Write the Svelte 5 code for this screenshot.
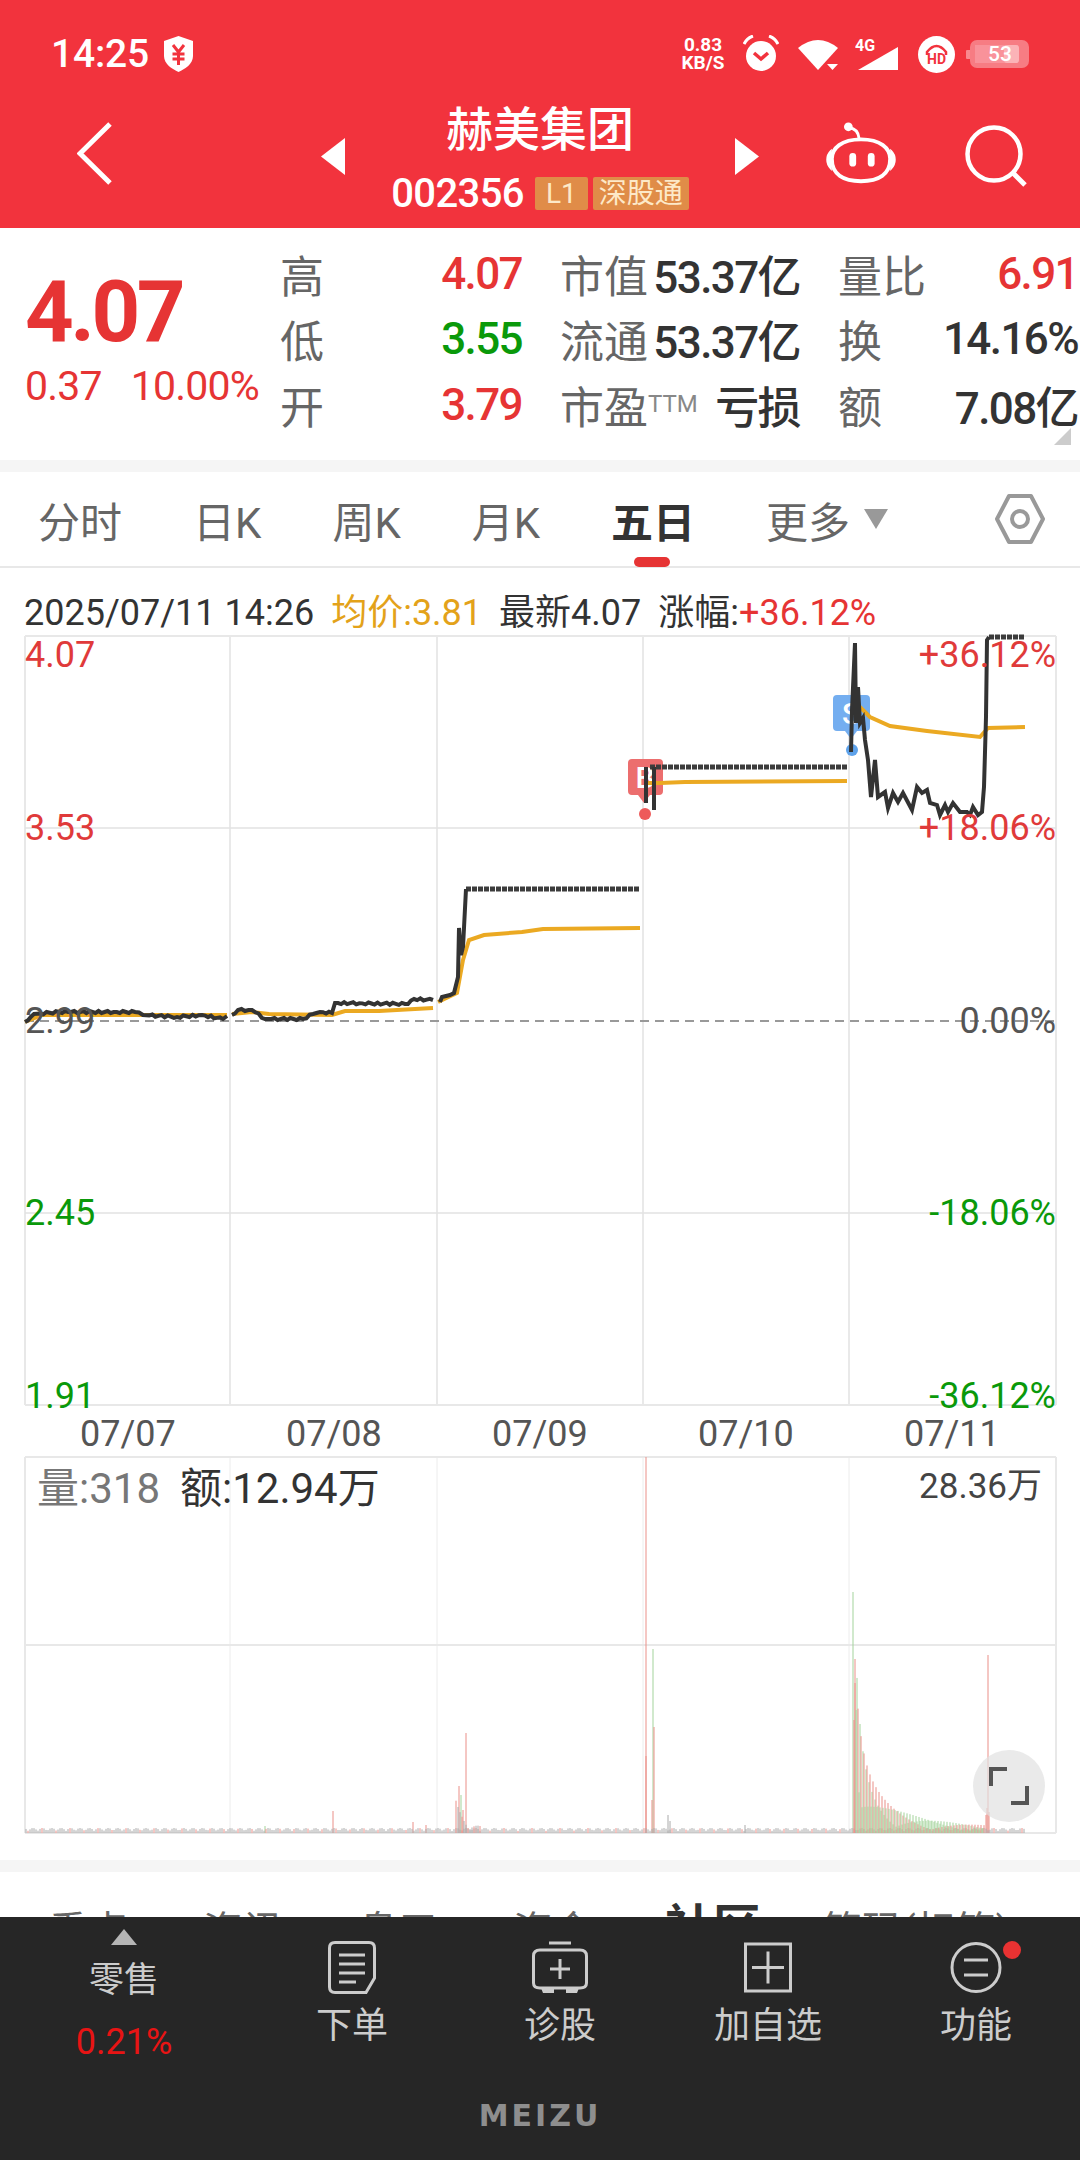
<script>
  const tabs = ["分时", "日K", "周K", "月K", "五日"];
  const lowerTabs = ["重点", "资讯", "盘口", "资金", "社区", "筹码(标签)"];

  const gridX = [25, 230, 437, 643, 849, 1056];
  const gridY = [636, 828, 1213, 1405];

  const leftLabels = [
    { text: "4.07", y: 667, color: "red" },
    { text: "3.53", y: 840, color: "red" },
    { text: "2.99", y: 1033, color: "gray" },
    { text: "2.45", y: 1225, color: "green" },
    { text: "1.91", y: 1408, color: "green" },
  ];
  const rightLabels = [
    { text: "+36.12%", y: 667, color: "red" },
    { text: "+18.06%", y: 840, color: "red" },
    { text: "0.00%", y: 1033, color: "gray" },
    { text: "-18.06%", y: 1225, color: "green" },
    { text: "-36.12%", y: 1408, color: "green" },
  ];
  const dates = ["07/07", "07/08", "07/09", "07/10", "07/11"];

  // adds a small wobble between anchors, the quiet days are not smooth
  function noisy(pts, amp) {
    const out = [];
    for (let i = 0; i < pts.length - 1; i++) {
      const [x0, y0] = pts[i];
      const [x1, y1] = pts[i + 1];
      const steps = Math.max(1, Math.floor((x1 - x0) / 3));
      for (let s = 0; s < steps; s++) {
        const t = s / steps;
        const w = s === 0 ? 0 : Math.round(Math.sin(x0 * 1.7 + s * 2.3) * amp);
        out.push([x0 + (x1 - x0) * t, y0 + (y1 - y0) * t + w]);
      }
    }
    out.push(pts[pts.length - 1]);
    return out;
  }

  const toPath = (pts) => pts.map((p) => p.join(",")).join(" ");

  const black = [
    noisy([[25, 1022], [34, 1014], [59, 1012], [135, 1012], [143, 1015], [177, 1017], [202, 1015], [223, 1019], [227, 1016]], 1),
    noisy([[232, 1015], [238, 1010], [252, 1010], [265, 1019], [303, 1019], [313, 1014], [320, 1012], [332, 1013], [335, 1003], [408, 1004], [414, 999], [433, 1000]], 1),
    [[440, 1002], [442, 997], [450, 995], [454, 993], [458, 977], [459, 928], [461, 955], [463, 947], [466, 889]],
    [[646, 803], [646, 767]],
    [[654, 810], [654, 767]],
    [[851, 752], [852, 710], [855, 643], [856, 723], [858, 687], [860, 723], [863, 718], [865, 740], [868, 760], [871, 797], [875, 760], [878, 797], [885, 792], [888, 808], [893, 793], [898, 802], [903, 793], [912, 810], [917, 787], [922, 793], [927, 790], [930, 803], [937, 805], [940, 815], [945, 805], [948, 812], [953, 803], [960, 812], [967, 812], [970, 815], [973, 807], [978, 815], [982, 812], [984, 787], [986, 717], [987, 640], [989, 637]],
  ];
  const flats = [
    [[466, 889], [640, 889]],
    [[650, 767], [847, 767]],
    [[989, 637], [1025, 637]],
  ];
  const yellow = [
    [[25, 1022], [42, 1015], [227, 1015]],
    [[232, 1014], [252, 1012], [269, 1014], [332, 1015], [345, 1011], [379, 1011], [433, 1008]],
    [[438, 1002], [457, 993], [463, 960], [469, 940], [484, 935], [522, 932], [543, 929], [640, 928]],
    [[647, 783], [660, 783], [685, 782], [847, 781]],
    [[855, 710], [860, 707], [870, 717], [890, 726], [927, 731], [980, 737], [988, 728], [1025, 727]],
  ];

  // volume bars: [x, top y, kind]
  const peaks = [
    [646, 1457, "r"], [646, 1756, "r"], [653, 1649, "g"], [654, 1727, "r"], [652, 1800, "r"],
    [853, 1592, "g"], [855, 1659, "r"], [855, 1683, "r"], [856, 1710, "g"], [854, 1720, "r"],
    [988, 1655, "r"], [986, 1815, "r"], [987, 1808, "r"], [989, 1812, "r"],
    [466, 1733, "r"], [459, 1786, "r"], [461, 1795, "g"], [463, 1810, "r"], [333, 1811, "r"],
    [413, 1822, "r"], [426, 1825, "r"], [668, 1815, "n"], [670, 1821, "n"], [745, 1825, "n"], [265, 1826, "g"],
  ];
  const volBars = [...peaks];
  for (let x = 26; x < 1026; x += 2) {
    const h = 2 + Math.abs(Math.sin(x * 12.9)) * 3;
    volBars.push([x, 1833 - h, x % 14 === 0 ? "r" : "n"]);
  }
  // day 3 and day 5 opening clusters fall away quickly
  for (let x = 456; x < 482; x += 2) {
    volBars.push([x, 1833 - (150 / (x - 450)) * (0.4 + Math.abs(Math.sin(x * 7.7))), x % 3 ? "n" : "r"]);
  }
  for (let x = 857; x < 985; x += 1) {
    const jitter = 0.3 + Math.abs(Math.sin(x * 7.3)) * 0.9;
    const h = (1600 / Math.pow(x - 848, 1.12)) * jitter;
    volBars.push([x, 1833 - h, x % 3 === 0 ? "r" : "g"]);
  }
</script>

<div class="page">
  <header class="top">
    <div class="status">
      <span class="time">14:25</span>
      <svg class="shield" viewBox="0 0 29 36">
        <path d="M14.5 0 L29 5 V20 C29 28 21 33 14.5 36 C8 33 0 28 0 20 V5 Z" fill="#fff" />
        <path d="M9 9 L14.5 16 L20 9 M8.5 18 H20.5 M8.5 23 H20.5 M14.5 16 V29" stroke="#f2333d" stroke-width="3" fill="none" />
      </svg>
      <div class="status-right">
        <div class="speed"><span>0.83</span><span>KB/S</span></div>
        <svg class="alarm" viewBox="0 0 36 38">
          <circle cx="18" cy="21" r="15" fill="#fff" />
          <path d="M11 18 L18 24 L25 18" stroke="#f2333d" stroke-width="3.5" fill="none" />
          <path d="M1 9 Q4 3 10 1 M35 9 Q32 3 26 1" stroke="#fff" stroke-width="3" fill="none" />
        </svg>
        <svg class="wifi" viewBox="0 0 40 30">
          <path d="M0 8 Q20 -8 40 8 L20 30 Z" fill="#fff" />
          <path d="M29 24 H40 L34.5 30 Z" fill="#fff" />
        </svg>
        <svg class="signal" viewBox="0 0 43 34">
          <path d="M3 34 L43 11 V34 Z" fill="#fff" />
          <text x="0" y="15" class="sig-text">4G</text>
        </svg>
        <svg class="hd" viewBox="0 0 37 37">
          <circle cx="18.5" cy="18.5" r="18.5" fill="#fff" />
          <path d="M9 19 V16 Q18.5 4 28 16 V19" stroke="#f2333d" stroke-width="2.5" fill="none" />
          <text x="18.5" y="28" text-anchor="middle" class="hd-text">HD</text>
        </svg>
        <svg class="battery" viewBox="0 0 63 28">
          <rect x="0" y="10" width="5" height="9" rx="1" fill="#f9888e" />
          <rect x="4" y="0" width="59" height="28" rx="7" fill="#f77c83" />
          <path d="M9 5 H52 V23 H9 Z" fill="#f9929a" />
          <rect x="38" y="5" width="15" height="18" rx="3" fill="#fbb3b7" />
          <text x="34" y="21" text-anchor="middle" class="bat-text">53</text>
        </svg>
      </div>
    </div>

    <div class="nav">
      <div class="nav-left">
        <svg class="back" viewBox="0 0 35 63">
          <path d="M33 2 L3 31.5 L33 61" stroke="#fff" stroke-width="5" fill="none" />
        </svg>
        <svg class="tri" viewBox="0 0 24 37"><path d="M24 0 V37 L0 18.5 Z" fill="#fff" /></svg>
      </div>
      <div class="nav-mid">
        <div class="title">赫美集团</div>
        <div class="code-row">
          <span class="code">002356</span>
          <span class="badge l1">L1</span>
          <span class="badge">深股通</span>
        </div>
      </div>
      <div class="nav-right">
        <svg class="tri" viewBox="0 0 24 37"><path d="M0 0 V37 L24 18.5 Z" fill="#fff" /></svg>
        <svg class="robot" viewBox="0 0 72 64">
          <circle cx="23" cy="5" r="4.5" fill="#fff" />
          <path d="M24 6 Q33 7 34 17" stroke="#fff" stroke-width="3" fill="none" />
          <path d="M36 18 C16 18 6 27 6 38 C6 54 18 61 36 61 C54 61 66 54 66 38 C66 27 56 18 36 18 Z" stroke="#fff" stroke-width="4" fill="none" />
          <path d="M5 30 C0 35 0 43 5 48 Z M67 30 C72 35 72 43 67 48 Z" fill="#fff" stroke="#fff" stroke-width="2" />
          <rect x="24" y="32" width="7" height="14" rx="3.5" fill="#fff" />
          <rect x="43" y="32" width="7" height="14" rx="3.5" fill="#fff" />
        </svg>
        <svg class="search" viewBox="0 0 64 62">
          <circle cx="29" cy="29" r="26.5" stroke="#fff" stroke-width="4.5" fill="none" />
          <path d="M48 48 L60 60" stroke="#fff" stroke-width="5" fill="none" />
        </svg>
      </div>
    </div>
  </header>

  <section class="quote">
    <div class="price-col">
      <div class="price">4.07</div>
      <div class="change"><span>0.37</span><span>10.00%</span></div>
    </div>
    <div class="stats">
      <div class="cell"><span class="lab">高</span><span class="num red">4.07</span></div>
      <div class="cell"><span class="lab">市值</span><span class="num strong">53.37亿</span></div>
      <div class="cell"><span class="lab">量比</span><span class="num red">6.91</span></div>
      <div class="cell"><span class="lab">低</span><span class="num green">3.55</span></div>
      <div class="cell"><span class="lab">流通</span><span class="num strong">53.37亿</span></div>
      <div class="cell"><span class="lab">换</span><span class="num strong">14.16%</span></div>
      <div class="cell"><span class="lab">开</span><span class="num red">3.79</span></div>
      <div class="cell">
        <span class="lab">市盈<sup>TTM</sup></span><span class="num strong">亏损</span>
      </div>
      <div class="cell"><span class="lab">额</span><span class="num strong">7.08亿</span></div>
    </div>
    <div class="corner"></div>
  </section>

  <div class="band"></div>

  <nav class="tabs">
    {#each tabs as t}
      <span class="tab" class:active={t === "五日"}>{t}</span>
    {/each}
    <span class="tab more">更多<i class="caret"></i></span>
    <svg class="hex" viewBox="0 0 50 50">
      <path d="M14 2 H36 L48 25 L36 48 H14 L2 25 Z" stroke="#999" stroke-width="4" fill="none" stroke-linejoin="round" />
      <circle cx="25" cy="25" r="8" stroke="#999" stroke-width="4" fill="none" />
    </svg>
  </nav>

  <div class="readout">
    <span class="dark">2025/07/11 14:26</span>
    <span class="amber">均价:3.81</span>
    <span class="dark">最新4.07</span>
    <span class="dark">涨幅:<em>+36.12%</em></span>
  </div>

  <svg class="price-chart" viewBox="0 630 1080 790">
    {#each gridX as x, i}
      <line x1={x} x2={x} y1="636" y2="1405" class="grid" class:edge={i === 0 || i === 5} />
    {/each}
    {#each gridY as y, i}
      <line x1="25" x2="1056" y1={y} y2={y} class="grid" class:edge={i === 0 || i === 3} />
    {/each}
    <line x1="25" x2="1056" y1="1021" y2="1021" class="zero" />

    <path d="M632 759 H659 Q663 759 663 763 V791 Q663 795 659 795 H650 L644 803 L638 795 H632 Q628 795 628 791 V763 Q628 759 632 759 Z" fill="#ec6e6e" />
    <text x="645" y="788" text-anchor="middle" class="mark">B</text>
    <circle cx="645" cy="814" r="6" fill="#ee5a5a" />
    <path d="M837 695 H866 Q870 695 870 699 V727 Q870 731 866 731 H857 L851 739 L845 731 H837 Q833 731 833 727 V699 Q833 695 837 695 Z" fill="#74aef0" />
    <text x="851" y="724" text-anchor="middle" class="mark">S</text>
    <circle cx="852" cy="750" r="6" fill="#5ea2ea" />

    {#each yellow as pts}
      <polyline points={toPath(pts)} class="avg" />
    {/each}
    {#each flats as pts}
      <polyline points={toPath(pts)} class="flat" />
    {/each}
    {#each black as pts}
      <polyline points={toPath(pts)} class="last" />
    {/each}

    {#each leftLabels as l}
      <text x="25" y={l.y} class="axis {l.color}-fill">{l.text}</text>
    {/each}
    {#each rightLabels as l}
      <text x="1056" y={l.y} text-anchor="end" class="axis {l.color}-fill">{l.text}</text>
    {/each}
  </svg>

  <div class="dates">
    {#each dates as d}
      <span>{d}</span>
    {/each}
  </div>

  <div class="vol-wrap">
    <svg class="vol-chart" viewBox="0 1455 1080 381">
      {#each gridX as x, i}
        <line x1={x} x2={x} y1="1457" y2="1833" class="grid thin" class:edge={i === 0 || i === 5} />
      {/each}
      <line x1="25" x2="1056" y1="1457" y2="1457" class="grid edge" />
      <line x1="25" x2="1056" y1="1645" y2="1645" class="grid edge" />
      <line x1="25" x2="1056" y1="1833" y2="1833" class="grid edge" />
      {#each volBars as b}
        <line x1={b[0]} x2={b[0]} y1={b[1]} y2="1833" class="bar {b[2]}" />
      {/each}
      <text x="37" y="1503" class="vol-text lab-fill">量:318</text>
      <text x="180" y="1503" class="vol-text">额:12.94万</text>
      <text x="1042" y="1498" text-anchor="end" class="vol-side">28.36万</text>
    </svg>
    <button class="expand" aria-label="expand">
      <svg viewBox="0 0 40 40" width="40" height="40">
        <path d="M2 20 V3 H18 M38 20 V37 H22" stroke="#555" stroke-width="4" fill="none" />
      </svg>
    </button>
  </div>

  <div class="gap"></div>
  <div class="band"></div>

  <nav class="lower-tabs">
    {#each lowerTabs as t}
      <span class="lower" class:on={t === "社区"}>{t}</span>
    {/each}
  </nav>

  <footer class="bar-bottom">
    <div class="actions">
      <div class="retail">
        <i class="up"></i>
        <span class="retail-name">零售</span>
        <span class="retail-pct">0.21%</span>
      </div>
      <div class="action">
        <svg viewBox="0 0 48 53" width="48" height="53">
          <path d="M7 1.5 H41 Q46.5 1.5 46.5 7 V37 L38 51.5 H7 Q1.5 51.5 1.5 46 V7 Q1.5 1.5 7 1.5 Z" class="ico" />
          <path d="M11 14 H37 M11 23 H37 M11 32 H37 M11 41 H28" class="ico" />
        </svg>
        <span>下单</span>
      </div>
      <div class="action">
        <svg viewBox="0 0 56 53" width="56" height="53">
          <path d="M17 2 H39 M8 9 H48 Q54.5 9 54.5 15 V42 Q54.5 47 48 47 H8 Q1.5 47 1.5 42 V15 Q1.5 9 8 9 Z M18 28 H38 M28 18 V38" class="ico" />
          <path d="M9 47 H22 V52 H11 Z M34 47 H47 L45 52 H34 Z" fill="#ccc" />
        </svg>
        <span>诊股</span>
      </div>
      <div class="action">
        <svg viewBox="0 0 48 50" width="48" height="50">
          <rect x="1.5" y="1.5" width="45" height="47" class="ico" />
          <path d="M8 25 H40 M24 9 V41" class="ico" />
        </svg>
        <span>加自选</span>
      </div>
      <div class="action fn">
        <svg viewBox="0 0 52 51" width="52" height="51">
          <circle cx="26" cy="25.5" r="24" class="ico" />
          <path d="M14 18 H38 M14 33 H38" class="ico" />
        </svg>
        <i class="dot"></i>
        <span>功能</span>
      </div>
    </div>
    <div class="brand">MEIZU</div>
  </footer>
</div>

<style>
  :global(body) {
    margin: 0;
    background: #fff;
  }

  .page {
    width: 1080px;
    height: 2160px;
    display: flex;
    flex-direction: column;
    overflow: hidden;
    font-family: Roboto, "Noto Sans CJK SC", sans-serif;
    color: #333;
  }

  svg {
    display: block;
    flex: none;
  }

  /* header */
  .top {
    background: #f2333d;
    height: 228px;
    flex: none;
    color: #fff;
  }

  .status {
    height: 100px;
    box-sizing: border-box;
    padding: 8px 51px 0 51px;
    display: flex;
    align-items: center;
  }

  .time {
    font-size: 39px;
    font-weight: 500;
    letter-spacing: -0.2px;
  }

  .shield {
    width: 29px;
    height: 36px;
    margin-left: 15px;
  }

  .status-right {
    margin-left: auto;
    display: flex;
    align-items: center;
  }

  .speed {
    display: flex;
    flex-direction: column;
    align-items: center;
    font-size: 19px;
    font-weight: 700;
    line-height: 18px;
    width: 42px;
  }

  .alarm {
    width: 36px;
    height: 38px;
    margin-left: 19px;
  }

  .wifi {
    width: 40px;
    height: 30px;
    margin-left: 19px;
    margin-top: 1px;
  }

  .signal {
    width: 43px;
    height: 34px;
    margin-left: 17px;
    margin-top: -3px;
  }

  .sig-text {
    font-size: 16px;
    font-weight: 700;
    fill: #fff;
  }

  .hd {
    width: 37px;
    height: 37px;
    margin-left: 20px;
  }

  .hd-text {
    font-size: 14px;
    font-weight: 700;
    fill: #f2333d;
  }

  .battery {
    width: 63px;
    height: 28px;
    margin-left: 11px;
  }

  .bat-text {
    font-size: 21px;
    font-weight: 500;
    fill: #fff;
  }

  .nav {
    display: grid;
    grid-template-columns: 345px 390px 345px;
    height: 112px;
  }

  .nav-left {
    display: flex;
    align-items: center;
    justify-content: space-between;
    padding-left: 77px;
  }

  .nav-right {
    display: flex;
    align-items: center;
  }

  .back {
    width: 35px;
    height: 63px;
    margin-top: -6px;
  }

  .tri {
    width: 24px;
    height: 37px;
  }

  .robot {
    width: 70px;
    height: 64px;
    margin-left: 67px;
    margin-top: -6px;
  }

  .search {
    width: 64px;
    height: 62px;
    margin-left: 69px;
  }

  .nav-mid {
    display: flex;
    flex-direction: column;
    align-items: center;
  }

  .title {
    font-size: 47px;
    line-height: 60px;
    font-weight: 500;
  }

  .code-row {
    margin-top: 16px;
    display: flex;
    align-items: center;
    gap: 5px;
    height: 34px;
  }

  .code {
    font-size: 40px;
    font-weight: 500;
    margin-right: 6px;
    letter-spacing: -0.6px;
  }

  .badge {
    background: #e08c48;
    color: #fde9c8;
    font-size: 28px;
    line-height: 33px;
    height: 33px;
    padding: 0 6px;
    border-radius: 2px;
    white-space: nowrap;
  }

  .badge.l1 {
    padding: 0 11px;
  }

  /* quote block */
  .quote {
    position: relative;
    flex: none;
    height: 232px;
    display: flex;
  }

  .price-col {
    width: 280px;
    flex: none;
    box-sizing: border-box;
    padding: 44px 0 0 25px;
    color: #e63434;
  }

  .price {
    font-size: 85px;
    line-height: 80px;
    font-weight: 700;
    letter-spacing: -3.5px;
  }

  .change {
    margin-top: 14px;
    font-size: 41px;
    line-height: 40px;
    letter-spacing: -0.8px;
    display: flex;
    gap: 29px;
    white-space: nowrap;
  }

  .stats {
    display: grid;
    grid-template-columns: 242px 240px 240px;
    grid-template-rows: repeat(3, 65.5px);
    column-gap: 38px;
    padding-top: 13px;
  }

  .cell {
    display: flex;
    align-items: center;
    justify-content: space-between;
    white-space: nowrap;
  }

  .lab {
    font-size: 44px;
    color: #666;
  }

  .lab sup {
    font-size: 24px;
    color: #888;
    vertical-align: 12px;
    line-height: 0;
  }

  .num {
    font-size: 44px;
    font-weight: 500;
    letter-spacing: -1.6px;
  }

  .num.strong {
    color: #333;
  }

  .num.red {
    color: #e63434;
  }

  .num.green {
    color: #0a990a;
  }

  .corner {
    position: absolute;
    left: 1054px;
    top: 200px;
    width: 0;
    height: 0;
    border-left: 17px solid transparent;
    border-bottom: 17px solid #ccc;
  }

  .band {
    height: 12px;
    background: #f5f5f5;
    flex: none;
  }

  /* tabs */
  .tabs {
    height: 96px;
    flex: none;
    box-sizing: border-box;
    border-bottom: 2px solid #e8e8e8;
    display: flex;
    align-items: center;
    gap: 71px;
    padding: 0 35px 0 38px;
  }

  .tab {
    position: relative;
    font-size: 42px;
    color: #666;
    white-space: nowrap;
  }

  .tab.active {
    color: #333;
    font-weight: 700;
  }

  .tab.active::after {
    content: "";
    position: absolute;
    left: 23px;
    bottom: -17px;
    width: 36px;
    height: 10px;
    border-radius: 5px;
    background: #e63434;
  }

  .more {
    display: flex;
    align-items: center;
  }

  .caret {
    margin-left: 14px;
    width: 0;
    height: 0;
    border-left: 12px solid transparent;
    border-right: 12px solid transparent;
    border-top: 20px solid #999;
  }

  .hex {
    width: 50px;
    height: 50px;
    margin-left: auto;
  }

  .readout {
    height: 62px;
    flex: none;
    box-sizing: border-box;
    padding: 23px 0 0 24px;
    font-size: 36px;
    line-height: 44px;
    display: flex;
    gap: 17px;
    white-space: nowrap;
  }

  .dark {
    color: #333;
  }

  .dark em {
    font-style: normal;
    color: #e63434;
  }

  .amber {
    color: #e3a21a;
  }

  /* charts */
  .price-chart {
    width: 1080px;
    height: 790px;
  }

  .grid {
    stroke: #e2e2e2;
    stroke-width: 1.5;
  }

  .grid.thin {
    stroke: #ececec;
    stroke-width: 1;
  }

  .grid.edge {
    stroke: #e8e8e8;
    stroke-width: 2;
  }

  .zero {
    stroke: #999;
    stroke-width: 2;
    stroke-dasharray: 9 6;
  }

  .mark {
    font-size: 30px;
    fill: #fff;
    font-weight: 500;
  }

  polyline {
    fill: none;
    stroke-linejoin: miter;
  }

  .avg {
    stroke: #eba922;
    stroke-width: 4;
  }

  .last {
    stroke: #333;
    stroke-width: 4;
  }

  .flat {
    stroke: #3c3c3c;
    stroke-width: 5;
    stroke-dasharray: 5 1;
  }

  .axis {
    font-size: 36px;
  }

  .red-fill {
    fill: #e03a3a;
  }

  .gray-fill {
    fill: #555;
  }

  .green-fill {
    fill: #0a990a;
  }

  .dates {
    height: 35px;
    flex: none;
    display: grid;
    grid-template-columns: repeat(5, 206px);
    padding-left: 80px;
    font-size: 36px;
    line-height: 28px;
    color: #555;
  }

  .vol-wrap {
    position: relative;
    flex: none;
    height: 381px;
  }

  .vol-chart {
    width: 1080px;
    height: 381px;
  }

  .bar {
    stroke-width: 1;
  }

  .bar.r {
    stroke: #ea8f88;
  }

  .bar.g {
    stroke: #a3d39b;
  }

  .bar.n {
    stroke: #aaa;
  }

  .vol-text {
    font-size: 42px;
    fill: #333;
  }

  .lab-fill {
    fill: #777;
  }

  .vol-side {
    font-size: 35px;
    fill: #444;
  }

  .expand {
    position: absolute;
    left: 973px;
    top: 295px;
    width: 72px;
    height: 72px;
    padding: 0;
    border: 0;
    border-radius: 50%;
    background: rgba(225, 225, 225, 0.7);
    display: flex;
    align-items: center;
    justify-content: center;
  }

  .gap {
    height: 24px;
    flex: none;
  }

  .lower-tabs {
    height: 45px;
    flex: none;
    overflow: hidden;
    display: flex;
    align-items: center;
    gap: 75px;
    padding: 36px 0 0 48px;
    box-sizing: border-box;
  }

  .lower {
    font-size: 40px;
    line-height: 48px;
    color: #666;
    white-space: nowrap;
    align-self: flex-start;
  }

  .lower.on {
    font-size: 48px;
    font-weight: 700;
    color: #333;
    margin: -4px -14px 0 -3px;
  }

  /* bottom bar */
  .bar-bottom {
    flex: 1;
    background: #262626;
    color: #ccc;
    display: flex;
    flex-direction: column;
  }

  .actions {
    display: grid;
    grid-template-columns: 248px repeat(4, 208px);
  }

  .retail {
    display: flex;
    flex-direction: column;
    align-items: center;
    padding-top: 12px;
  }

  .up {
    width: 0;
    height: 0;
    border-left: 13px solid transparent;
    border-right: 13px solid transparent;
    border-bottom: 16px solid #b5b5b5;
  }

  .retail-name {
    margin-top: 15px;
    font-size: 35px;
    line-height: 42px;
  }

  .retail-pct {
    margin-top: 19px;
    font-size: 36px;
    line-height: 42px;
    color: #e81414;
  }

  .action {
    position: relative;
    display: flex;
    flex-direction: column;
    align-items: center;
    padding-top: 24px;
    font-size: 36px;
    line-height: 44px;
  }

  .action svg {
    height: 53px;
    margin-bottom: 10px;
  }

  .ico {
    fill: none;
    stroke: #ccc;
    stroke-width: 3;
  }

  .dot {
    position: absolute;
    left: 131px;
    top: 24px;
    width: 18px;
    height: 18px;
    border-radius: 50%;
    background: #e93232;
  }

  .brand {
    margin-top: 38px;
    text-align: center;
    font-family: "DejaVu Sans", sans-serif;
    font-weight: 700;
    font-size: 30px;
    line-height: 30px;
    letter-spacing: 3px;
    color: #8e8e8e;
  }
</style>
